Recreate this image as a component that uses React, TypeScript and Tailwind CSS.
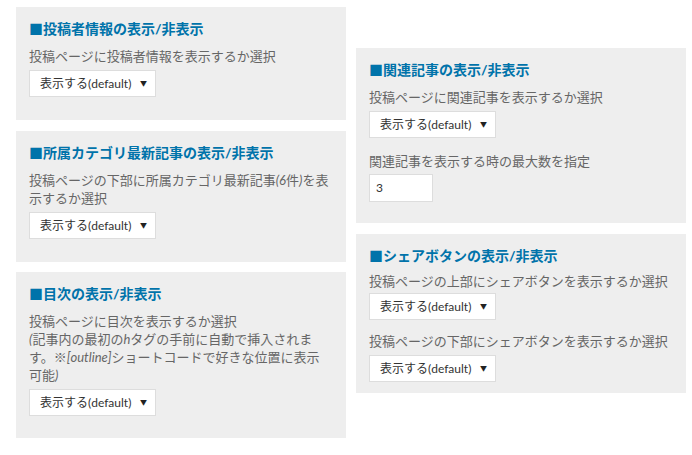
import type { ReactNode } from 'react';

const font = { fontFamily: 'Lato, "Noto Sans CJK JP", sans-serif' };

function Select() {
  return (
    <div className="mt-[5px] flex h-[27px] w-[127px] items-center border border-[#dddddd] bg-white pl-[10px] pr-[8px] text-[12px] text-[#333333]">
      <span>表示する(default)</span>
      <span className="ml-auto text-[7px] text-[#222222]">▼</span>
    </div>
  );
}

function Panel({ title, children, className = '' }: { title: string; children: ReactNode; className?: string }) {
  return (
    <div className={`bg-[#eeeeee] px-[13px] pt-3 ${className}`}>
      <h3 className="text-[14px] font-bold leading-[20px] text-[#0073aa]">■{title}</h3>
      {children}
    </div>
  );
}

function Desc({ children, className = 'mt-2' }: { children: ReactNode; className?: string }) {
  return <p className={`text-[13px] leading-[18px] text-[#666666] ${className}`}>{children}</p>;
}

export default function App() {
  return (
    <div className="flex min-h-[455px] gap-[10px] bg-white pl-4 pt-[7px]" style={font}>
      <div className="flex w-[330px] flex-col gap-[11px]">
        <Panel title="投稿者情報の表示/非表示" className="pb-[23px]">
          <Desc>投稿ページに投稿者情報を表示するか選択</Desc>
          <Select />
        </Panel>

        <Panel title="所属カテゴリ最新記事の表示/非表示" className="pb-[23px]">
          <Desc>
            投稿ページの下部に所属カテゴリ最新記事<i>(6</i>件<i>)</i>を表示するか選択
          </Desc>
          <Select />
        </Panel>

        <Panel title="目次の表示/非表示" className="-mt-px pb-[22px]">
          <Desc>
            投稿ページに目次を表示するか選択
            <br />
            <i>(</i>記事内の最初の<i>h</i>タグの手前に自動で挿入されます。※<i>[outline]</i>
            ショートコードで好きな位置に表示
            <br />
            可能<i>)</i>
          </Desc>
          <Select />
        </Panel>
      </div>

      <div className="mt-[41px] flex w-[330px] flex-col gap-[11px]">
        <Panel title="関連記事の表示/非表示" className="pb-[21px]">
          <Desc>投稿ページに関連記事を表示するか選択</Desc>
          <Select />
          <Desc className="mt-[14px]">関連記事を表示する時の最大数を指定</Desc>
          <div className="mt-1 flex h-[28px] w-[64px] items-center border border-[#dddddd] bg-white pl-[6px] text-[12px] text-[#333333]">
            3
          </div>
        </Panel>

        <Panel title="シェアボタンの表示/非表示" className="pb-[11px]">
          <Desc className="mt-[6px]">投稿ページの上部にシェアボタンを表示するか選択</Desc>
          <div className="-mt-[2px]">
            <Select />
          </div>
          <Desc className="mt-[12px]">投稿ページの下部にシェアボタンを表示するか選択</Desc>
          <Select />
        </Panel>
      </div>
    </div>
  );
}
